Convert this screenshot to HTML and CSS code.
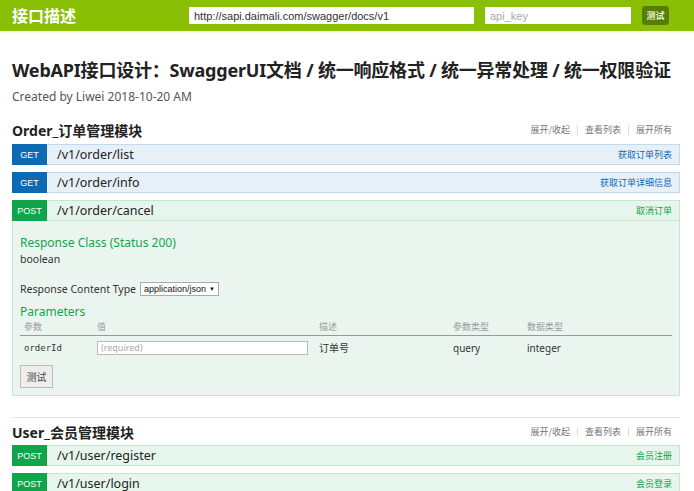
FILE: index.html
```html
<!DOCTYPE html>
<html>
<head>
<meta charset="utf-8">
<link rel="stylesheet" href="styles.css">
</head>
<body>
<header class="topbar">
  <div class="brand">接口描述</div>
  <input class="url-input" type="text" value="http://sapi.daimali.com/swagger/docs/v1">
  <input class="key-input" type="text" placeholder="api_key">
  <button class="explore">测试</button>
</header>
<main class="container">
  <h1 class="title">WebAPI接口设计：SwaggerUI文档 / 统一响应格式 / 统一异常处理 / 统一权限验证</h1>
  <p class="created">Created by Liwei 2018-10-20 AM</p>

  <section class="resource">
    <div class="res-head">
      <h2 class="res-name">Order_订单管理模块</h2>
      <ul class="res-links">
        <li>展开/收起</li>
        <li>查看列表</li>
        <li>展开所有</li>
      </ul>
    </div>
    <div class="op get">
      <span class="verb">GET</span><span class="path">/v1/order/list</span><span class="summary">获取订单列表</span>
    </div>
    <div class="op get">
      <span class="verb">GET</span><span class="path">/v1/order/info</span><span class="summary">获取订单详细信息</span>
    </div>
    <div class="op post open">
      <span class="verb">POST</span><span class="path">/v1/order/cancel</span><span class="summary">取消订单</span>
    </div>
    <div class="op-content">
      <h4 class="green-h">Response Class (Status 200)</h4>
      <div class="model">boolean</div>
      <div class="ctype">Response Content Type <span class="select">application/json <span class="arrow">▼</span></span></div>
      <h4 class="green-h params-h">Parameters</h4>
      <table class="params">
        <thead>
          <tr><th class="c1">参数</th><th class="c2">值</th><th class="c3">描述</th><th class="c4">参数类型</th><th class="c5">数据类型</th></tr>
        </thead>
        <tbody>
          <tr><td class="code">orderId</td><td><input class="req" type="text" placeholder="(required)"></td><td>订单号</td><td>query</td><td>integer</td></tr>
        </tbody>
      </table>
      <button class="try">测试</button>
    </div>
  </section>

  <section class="resource second">
    <div class="res-head">
      <h2 class="res-name">User_会员管理模块</h2>
      <ul class="res-links">
        <li>展开/收起</li>
        <li>查看列表</li>
        <li>展开所有</li>
      </ul>
    </div>
    <div class="op post">
      <span class="verb">POST</span><span class="path">/v1/user/register</span><span class="summary">会员注册</span>
    </div>
    <div class="op post">
      <span class="verb">POST</span><span class="path">/v1/user/login</span><span class="summary">会员登录</span>
    </div>
  </section>
</main>
</body>
</html>
```

FILE: styles.css
```css
* { box-sizing: border-box; }
html, body { margin: 0; padding: 0; background: #fff; }
body {
  font-family: "Noto Sans", "Noto Sans CJK SC", sans-serif;
  color: #333;
  overflow: hidden;
}

.topbar {
  background: #89bf04;
  height: 31px;
  display: flex;
  align-items: center;
  padding: 0 12px;
  border-bottom: 2px solid #f4f9e8;
  box-sizing: content-box;
}
.brand {
  font-family: "Noto Sans CJK SC", sans-serif;
  font-weight: 700;
  font-size: 16px;
  color: #fff;
  width: 177px;
  margin-top: -2px;
}
.url-input, .key-input {
  height: 17px;
  border: 1px solid #fff;
  background: #fff;
  font-family: "Liberation Sans", Arial, sans-serif;
  font-size: 11px;
  color: #333;
  padding: 0 4px;
  outline: none;
}
.url-input { width: 285px; }
.key-input { width: 146px; margin-left: 11px; }
.key-input::placeholder { color: #aaa; }
.explore {
  margin-left: 11px;
  height: 19px;
  width: 27px;
  padding: 0;
  border: none;
  border-radius: 3px;
  background: #547f00;
  color: #e8f0d8;
  font-family: "Noto Sans CJK SC", sans-serif;
  font-size: 9px;
  font-weight: 700;
}

.container { padding: 0 14px 0 12px; }

.title {
  font-family: "Noto Sans", "Noto Sans CJK SC", sans-serif;
  font-weight: 700;
  font-size: 18px;
  color: #222;
  margin: 24px 0 0;
  line-height: 26px;
  white-space: nowrap;
  letter-spacing: -0.2px;
}
.created {
  font-size: 12px;
  color: #555;
  margin: 5px 0 0;
  line-height: 18px;
}

.resource { margin-top: 14px; }
.resource.second {
  margin-top: 21px;
  border-top: 1px solid #e5e5e5;
  padding-top: 4px;
}
.res-head {
  display: flex;
  align-items: center;
  justify-content: space-between;
  height: 20px;
  margin-bottom: 4px;
}
.second .res-head { margin-bottom: 3px; }
.res-name {
  font-family: "Noto Sans", "Noto Sans CJK SC", sans-serif;
  font-size: 14px;
  font-weight: 700;
  color: #222;
  margin: 0;
}
.res-links {
  list-style: none;
  display: flex;
  margin: 0;
  padding: 0 8px 0 0;
  font-family: "Noto Sans CJK SC", sans-serif;
  font-size: 9px;
  color: #777;
}
.res-links li { padding: 0 7px; border-left: 1px solid #ddd; line-height: 10px; }
.res-links li:first-child { border-left: none; }
.res-links li:last-child { padding-right: 0; }

.op {
  display: flex;
  align-items: center;
  height: 21px;
  margin-bottom: 7px;
  border: 1px solid;
}
.op .verb {
  width: 35px;
  align-self: stretch;
  margin: -1px 0 -1px -1px;
  display: flex;
  align-items: center;
  justify-content: center;
  color: #fff;
  font-family: "Liberation Sans Narrow", "Liberation Sans", sans-serif;
  font-size: 9px;
  text-transform: uppercase;
}
.op .path {
  flex: 1;
  padding-left: 10px;
  font-size: 12.5px;
  color: #222;
}
.op .summary {
  font-family: "Noto Sans CJK SC", sans-serif;
  font-size: 9px;
  padding-right: 7px;
}
.op.get { background: #e7f0f7; border-color: #c3d9ec; }
.op.get .verb { background: #0f6ab4; }
.op.get .summary { color: #0f6ab4; }
.op.post { background: #e7f6ec; border-color: #c3e8d1; }
.op.post .verb { background: #10a54a; }
.op.post .summary { color: #10a54a; }
.op.open { margin-bottom: 0; }

.op-content {
  background: #ebf5f0;
  border: 1px solid #c3e8d1;
  border-top: none;
  padding: 14px 7px 6px;
  height: 175px;
}
.green-h {
  margin: 0;
  font-weight: 400;
  font-size: 12px;
  color: #10a54a;
  line-height: 16px;
}
.model { font-size: 10.5px; color: #333; margin-top: 1px; line-height: 14px; }
.ctype {
  margin-top: 16px;
  font-size: 10.5px;
  color: #333;
  display: flex;
  align-items: center;
  gap: 4px;
}
.select {
  display: inline-flex;
  align-items: center;
  gap: 3px;
  height: 14px;
  padding: 0 3px;
  border: 1px solid #aaa;
  background: #fff;
  font-family: "Liberation Sans", Arial, sans-serif;
  font-size: 9px;
  color: #111;
}
.select .arrow { font-size: 6px; }
.params-h { margin-top: 8px; }
.params {
  width: 100%;
  border-collapse: collapse;
  margin-top: 1px;
}
.params th {
  text-align: left;
  font-family: "Noto Sans CJK SC", sans-serif;
  font-weight: 400;
  font-size: 9px;
  color: #999;
  padding: 0 4px 2px;
  border-bottom: 1px solid #999;
  line-height: 12px;
}
.params td {
  font-size: 10px;
  color: #333;
  padding: 4px 4px 0;
  vertical-align: middle;
}
.params .c1 { width: 73px; }
.params .c2 { width: 222px; }
.params .c3 { width: 134px; }
.params .c4 { width: 74px; }
.params td.code {
  font-family: "DejaVu Sans Mono", monospace;
  font-size: 9px;
  color: #333;
}
.req {
  width: 211px;
  height: 14px;
  border: 1px solid #bbb;
  background: #fff;
  font-family: "Noto Sans", sans-serif;
  font-size: 9px;
  padding: 0 3px;
}
.req::placeholder { color: #aaa; }
.try {
  margin-top: 10px;
  width: 33px;
  height: 23px;
  padding: 0;
  border: 1px solid #bbb;
  background: #eee;
  font-family: "Noto Sans CJK SC", sans-serif;
  font-size: 10px;
  color: #444;
}
```
